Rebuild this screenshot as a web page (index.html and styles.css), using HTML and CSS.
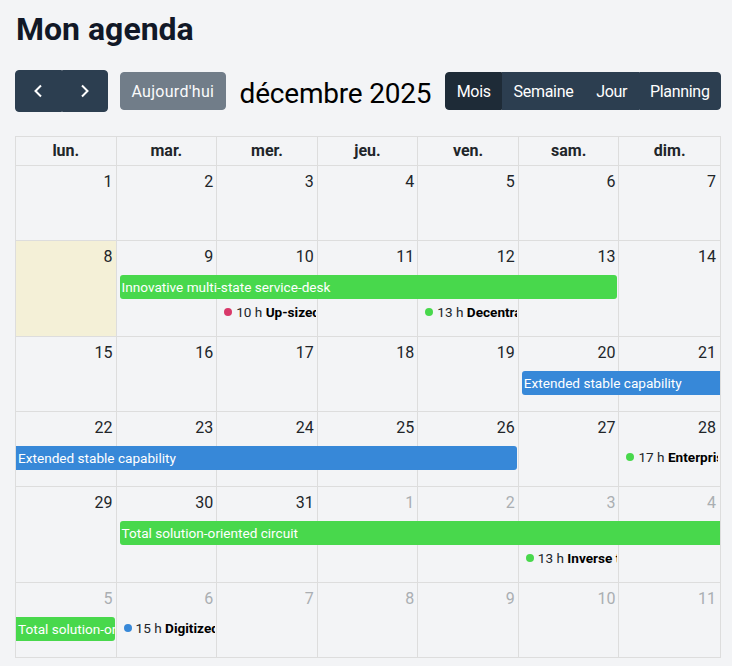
FILE: index.html
```html
<!DOCTYPE html>
<html lang="fr">
<head>
    <meta charset="UTF-8">
    <meta name="viewport" content="width=device-width, initial-scale=1.0">
    <title>Mon agenda</title>
    <link rel="stylesheet" href="styles.css">
</head>
<body>
    <main class="page">
        <h1 class="page-title">Mon agenda</h1>

        <div class="toolbar">
            <div class="toolbar-chunk">
                <div class="btn-group">
                    <button class="btn btn-icon" type="button" aria-label="Mois précédent">
                        <svg width="10" height="14" viewBox="0 0 10 14"><path d="M8 1.5 L2.5 7 L8 12.5" /></svg>
                    </button>
                    <button class="btn btn-icon" type="button" aria-label="Mois suivant">
                        <svg width="10" height="14" viewBox="0 0 10 14"><path d="M2 1.5 L7.5 7 L2 12.5" /></svg>
                    </button>
                </div>
                <button class="btn btn-today" type="button" disabled>Aujourd'hui</button>
            </div>
            <h2 class="toolbar-title">décembre 2025</h2>
            <div class="btn-group">
                <button class="btn is-active" type="button">Mois</button>
                <button class="btn" type="button">Semaine</button>
                <button class="btn" type="button">Jour</button>
                <button class="btn" type="button">Planning</button>
            </div>
        </div>

        <div class="month">
            <div class="month-head">
                <div class="col-head">lun.</div>
                <div class="col-head">mar.</div>
                <div class="col-head">mer.</div>
                <div class="col-head">jeu.</div>
                <div class="col-head">ven.</div>
                <div class="col-head">sam.</div>
                <div class="col-head">dim.</div>
            </div>

            <!-- semaine 1 -->
            <div class="week">
                <div class="day c1"></div><div class="day c2"></div><div class="day c3"></div><div class="day c4"></div>
                <div class="day c5"></div><div class="day c6"></div><div class="day c7"></div>
                <span class="day-num c1">1</span><span class="day-num c2">2</span><span class="day-num c3">3</span>
                <span class="day-num c4">4</span><span class="day-num c5">5</span><span class="day-num c6">6</span>
                <span class="day-num c7">7</span>
            </div>

            <!-- semaine 2 -->
            <div class="week">
                <div class="day c1 is-today"></div><div class="day c2"></div><div class="day c3"></div><div class="day c4"></div>
                <div class="day c5"></div><div class="day c6"></div><div class="day c7"></div>
                <span class="day-num c1">8</span><span class="day-num c2">9</span><span class="day-num c3">10</span>
                <span class="day-num c4">11</span><span class="day-num c5">12</span><span class="day-num c6">13</span>
                <span class="day-num c7">14</span>
                <div class="ev-bar ev-green line1" style="grid-column: 2 / span 5">Innovative multi-state service-desk</div>
                <div class="ev-dot line2 c3"><span class="dot dot-pink"></span>10 h&nbsp;<b>Up-sized bandwidth-monitored hierarchy</b></div>
                <div class="ev-dot line2 c5"><span class="dot dot-green"></span>13 h&nbsp;<b>Decentralized optimal matrix</b></div>
            </div>

            <!-- semaine 3 -->
            <div class="week">
                <div class="day c1"></div><div class="day c2"></div><div class="day c3"></div><div class="day c4"></div>
                <div class="day c5"></div><div class="day c6"></div><div class="day c7"></div>
                <span class="day-num c1">15</span><span class="day-num c2">16</span><span class="day-num c3">17</span>
                <span class="day-num c4">18</span><span class="day-num c5">19</span><span class="day-num c6">20</span>
                <span class="day-num c7">21</span>
                <div class="ev-bar ev-blue line1 cont-end" style="grid-column: 6 / span 2">Extended stable capability</div>
            </div>

            <!-- semaine 4 -->
            <div class="week">
                <div class="day c1"></div><div class="day c2"></div><div class="day c3"></div><div class="day c4"></div>
                <div class="day c5"></div><div class="day c6"></div><div class="day c7"></div>
                <span class="day-num c1">22</span><span class="day-num c2">23</span><span class="day-num c3">24</span>
                <span class="day-num c4">25</span><span class="day-num c5">26</span><span class="day-num c6">27</span>
                <span class="day-num c7">28</span>
                <div class="ev-bar ev-blue line1 cont-start" style="grid-column: 1 / span 5">Extended stable capability</div>
                <div class="ev-dot line1 c7"><span class="dot dot-green"></span>17 h&nbsp;<b>Enterprise-wide dynamic website</b></div>
            </div>

            <!-- semaine 5 -->
            <div class="week">
                <div class="day c1"></div><div class="day c2"></div><div class="day c3"></div><div class="day c4"></div>
                <div class="day c5"></div><div class="day c6"></div><div class="day c7"></div>
                <span class="day-num c1">29</span><span class="day-num c2">30</span><span class="day-num c3">31</span>
                <span class="day-num c4 is-other">1</span><span class="day-num c5 is-other">2</span>
                <span class="day-num c6 is-other">3</span><span class="day-num c7 is-other">4</span>
                <div class="ev-bar ev-green line1 cont-end" style="grid-column: 2 / span 6">Total solution-oriented circuit</div>
                <div class="ev-dot line2 c6"><span class="dot dot-green"></span>13 h&nbsp;<b>Inverse tangible array</b></div>
            </div>

            <!-- semaine 6 -->
            <div class="week">
                <div class="day c1"></div><div class="day c2"></div><div class="day c3"></div><div class="day c4"></div>
                <div class="day c5"></div><div class="day c6"></div><div class="day c7"></div>
                <span class="day-num c1 is-other">5</span><span class="day-num c2 is-other">6</span>
                <span class="day-num c3 is-other">7</span><span class="day-num c4 is-other">8</span>
                <span class="day-num c5 is-other">9</span><span class="day-num c6 is-other">10</span>
                <span class="day-num c7 is-other">11</span>
                <div class="ev-bar ev-green line1 cont-start" style="grid-column: 1 / span 1">Total solution-oriented circuit</div>
                <div class="ev-dot line1 c2"><span class="dot dot-blue"></span>15 h&nbsp;<b>Digitized client-server hub</b></div>
            </div>
        </div>
    </main>
</body>
</html>
```

FILE: styles.css
```css
body {
    margin: 0;
    background-color: #f3f4f6;
    color: #212529;
    font-family: Roboto, "Noto Sans", sans-serif;
    font-size: 16px;
}
.page {
    padding: 10px 11px 20px 15px;
}
.page-title {
    margin: 0 0 22px 1px;
    font-size: 32px;
    line-height: 38px;
    font-weight: 700;
    color: #111827;
}

/* barre d'outils */
.toolbar {
    display: flex;
    justify-content: space-between;
    align-items: center;
    margin-bottom: 24px;
}
.toolbar-chunk {
    display: flex;
    align-items: center;
    gap: 12px;
}
.toolbar-title {
    margin: 0;
    padding-top: 5px;
    font-size: 28px;
    font-weight: 400;
    line-height: 1.2;
    letter-spacing: -0.2px;
    color: #000;
    white-space: nowrap;
}
.btn-group {
    display: flex;
}
.btn {
    font-family: inherit;
    font-size: 16px;
    line-height: 24px;
    padding: 7px 10.4px 5px;
    letter-spacing: -0.3px;
    color: #fff;
    background-color: #2c3e50;
    border: 1px solid #2c3e50;
    border-radius: 4px;
    white-space: nowrap;
    cursor: pointer;
}
.btn-group .btn {
    border-radius: 0;
}
.btn-group .btn:first-child {
    border-top-left-radius: 4px;
    border-bottom-left-radius: 4px;
}
.btn-group .btn:last-child {
    border-top-right-radius: 4px;
    border-bottom-right-radius: 4px;
}
.btn.is-active {
    background-color: #1e2b37;
    border-color: #1e2b37;
}
.btn-icon {
    width: 46.5px;
    height: 42px;
    padding: 0;
    display: flex;
    align-items: center;
    justify-content: center;
}
.btn-icon svg path {
    fill: none;
    stroke: #fff;
    stroke-width: 2;
}
.btn-today {
    letter-spacing: 0.3px;
    opacity: 0.65;
    cursor: default;
}

/* grille du mois */
.month {
    border: 1px solid #dddddd;
    border-bottom: 0;
}
.month-head,
.week {
    display: grid;
    grid-template-columns: repeat(7, minmax(0, 1fr));
    border-bottom: 1px solid #dddddd;
}
.col-head {
    padding: 2px 4px;
    line-height: 1.5;
    font-weight: 700;
    text-align: center;
    border-right: 1px solid #dddddd;
}
.col-head:last-child {
    border-right: 0;
}
.week {
    grid-template-rows: 34px auto auto 13px;
    min-height: 74px;
}
.day {
    grid-row: 1 / -1;
    border-right: 1px solid #dddddd;
}
.day.c7 {
    border-right: 0;
}
.day.is-today {
    background-color: rgba(255, 220, 40, 0.15);
}
.c1 { grid-column: 1; }
.c2 { grid-column: 2; }
.c3 { grid-column: 3; }
.c4 { grid-column: 4; }
.c5 { grid-column: 5; }
.c6 { grid-column: 6; }
.c7 { grid-column: 7; }
.day-num {
    grid-row: 1;
    justify-self: end;
    align-self: start;
    padding: 4px;
    line-height: 1.5;
}
.day-num.is-other {
    color: #aaaeb2;
}
.line1 { grid-row: 2; }
.line2 { grid-row: 3; }

/* événements */
.ev-bar {
    align-self: start;
    height: 24px;
    line-height: 24px;
    margin: 0 2px 2px 3px;
    padding-left: 2px;
    font-size: 13.6px;
    color: #fff;
    border-radius: 3px;
    white-space: nowrap;
    overflow: hidden;
}
.ev-green {
    background-color: #48d84c;
}
.ev-blue {
    background-color: #3788d8;
}
.ev-bar.cont-start {
    margin-left: 0;
    border-top-left-radius: 0;
    border-bottom-left-radius: 0;
}
.ev-bar.cont-end {
    margin-right: 0;
    border-top-right-radius: 0;
    border-bottom-right-radius: 0;
}
.ev-dot {
    align-self: start;
    display: flex;
    align-items: center;
    height: 22px;
    margin: 0 2px 0 3px;
    font-size: 13.6px;
    color: #212529;
    white-space: nowrap;
    overflow: hidden;
}
.ev-dot b {
    font-weight: 700;
    color: #000;
}
.dot {
    flex: none;
    width: 8px;
    height: 8px;
    margin: 0 4px;
    border-radius: 50%;
}
.dot-pink { background-color: #d8396a; }
.dot-green { background-color: #48d84c; }
.dot-blue { background-color: #3788d8; }
```
